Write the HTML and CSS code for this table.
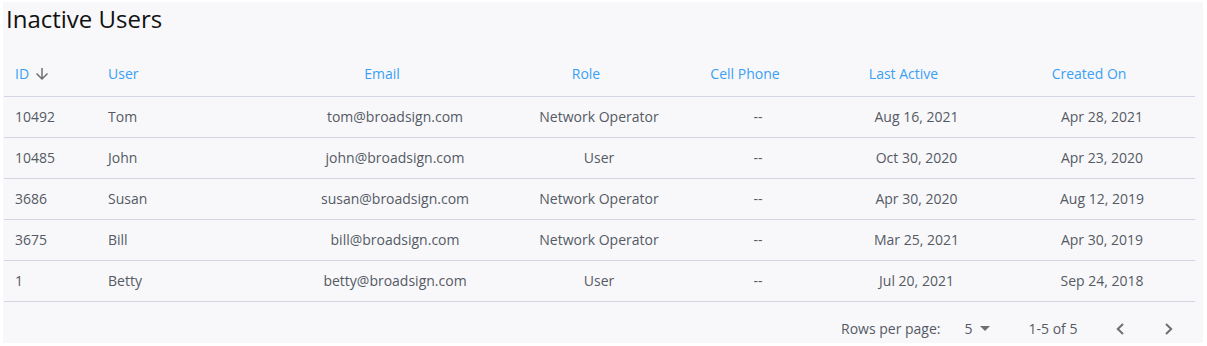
FILE: index.html
```html
<!DOCTYPE html>
<html>
<head>
<meta charset="utf-8">
<link rel="stylesheet" href="styles.css">
</head>
<body>
<div class="card">
  <h1 class="title">Inactive Users</h1>
  <table class="users">
    <colgroup>
      <col class="c-id"><col class="c-user"><col class="c-email"><col class="c-role"><col class="c-phone"><col class="c-last"><col class="c-created">
    </colgroup>
    <thead>
      <tr>
        <th class="left">ID<svg class="sort" viewBox="0 0 24 24" width="18" height="18"><path d="M20 12l-1.41-1.41L13 16.17V4h-2v12.17l-5.58-5.59L4 12l8 8 8-8z" fill="#6f6f6f"/></svg></th>
        <th class="left">User</th>
        <th>Email<span class="sort-space"></span></th>
        <th>Role<span class="sort-space"></span></th>
        <th>Cell Phone<span class="sort-space"></span></th>
        <th>Last Active<span class="sort-space"></span></th>
        <th>Created On<span class="sort-space"></span></th>
      </tr>
    </thead>
    <tbody>
      <tr><td class="left">10492</td><td class="left">Tom</td><td>tom@broadsign.com</td><td>Network Operator</td><td>--</td><td>Aug 16, 2021</td><td>Apr 28, 2021</td></tr>
      <tr><td class="left">10485</td><td class="left">John</td><td>john@broadsign.com</td><td>User</td><td>--</td><td>Oct 30, 2020</td><td>Apr 23, 2020</td></tr>
      <tr><td class="left">3686</td><td class="left">Susan</td><td>susan@broadsign.com</td><td>Network Operator</td><td>--</td><td>Apr 30, 2020</td><td>Aug 12, 2019</td></tr>
      <tr><td class="left">3675</td><td class="left">Bill</td><td>bill@broadsign.com</td><td>Network Operator</td><td>--</td><td>Mar 25, 2021</td><td>Apr 30, 2019</td></tr>
      <tr><td class="left">1</td><td class="left">Betty</td><td>betty@broadsign.com</td><td>User</td><td>--</td><td>Jul 20, 2021</td><td>Sep 24, 2018</td></tr>
    </tbody>
  </table>
  <div class="footer">
    <span class="rpp">Rows per page:</span>
    <span class="select">5 <svg class="caret" viewBox="0 0 10 5" width="10" height="5"><path d="M0 0h10L5 5z" fill="#6f6f6f"/></svg></span>
    <span class="range">1-5 of 5</span>
    <svg class="chev prev" viewBox="0 0 8 12" width="8" height="12"><path d="M7 1L1.8 6 7 11" fill="none" stroke="#6f6f6f" stroke-width="2"/></svg>
    <svg class="chev next" viewBox="0 0 8 12" width="8" height="12"><path d="M1 1l5.2 5L1 11" fill="none" stroke="#6f6f6f" stroke-width="2"/></svg>
  </div>
</div>
</body>
</html>
```

FILE: styles.css
```css
html, body {
  margin: 0;
  padding: 0;
  background: #ffffff;
}
body {
  font-family: "Open Sans", "Liberation Sans", sans-serif;
}
.card {
  margin: 2px 4px 0 3px;
  width: 1200px;
  height: 341px;
  box-sizing: border-box;
  padding: 0 8px 0 1px;
  background: #f8f8fb;
}
.title {
  margin: 0;
  padding-left: 2px;
  font-size: 24px;
  font-weight: 400;
  line-height: 34px;
  color: #111111;
}
.users {
  margin-top: 14px;
  width: 1191px;
  border-collapse: collapse;
  table-layout: fixed;
  font-size: 14px;
}
.c-id { width: 93px; }
.c-user { width: 187px; }
.c-email { width: 222px; }
.c-role { width: 186px; }
.c-phone { width: 132px; }
.c-last { width: 185px; }
.c-created { width: 186px; }
.users th {
  height: 46px;
  font-weight: 400;
  color: #3a9ff5;
  text-align: center;
  vertical-align: middle;
  padding: 0;
  border-bottom: 1px solid #d3d6e3;
}
.users td {
  height: 39px;
  color: #555a63;
  text-align: center;
  vertical-align: middle;
  padding: 0 0 1px 0;
  border-bottom: 1px solid #d3d6e3;
}
.users td.left {
  text-align: left;
  padding: 0 0 1px 11px;
}
.users th.left {
  text-align: left;
  padding-left: 11px;
}
.sort {
  vertical-align: -4px;
  margin-left: 4px;
}
.sort-space {
  display: inline-block;
  width: 26px;
}
.footer {
  display: flex;
  align-items: center;
  height: 31px;
  padding-top: 11px;
  font-size: 14px;
  color: #555a63;
}
.rpp {
  margin-left: 837px;
}
.select {
  margin-left: 24px;
  display: inline-flex;
  align-items: center;
}
.caret {
  margin-left: 7px;
}
.range {
  margin-left: 39px;
}
.chev.prev {
  margin-left: 39px;
}
.chev.next {
  margin-left: 41px;
}
```
